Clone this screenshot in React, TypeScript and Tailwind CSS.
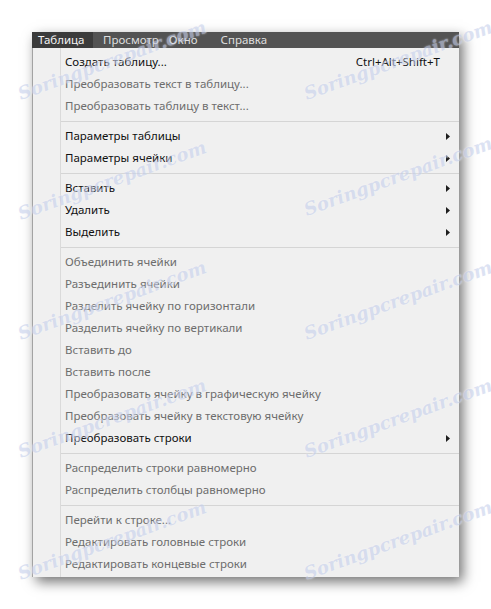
import React from 'react';

type Item =
    | { sep: true }
    | { label: string; disabled?: boolean; sub?: boolean; keys?: string };

const items: Item[] = [
    { label: 'Создать таблицу...', keys: 'Ctrl+Alt+Shift+T' },
    { label: 'Преобразовать текст в таблицу...', disabled: true },
    { label: 'Преобразовать таблицу в текст...', disabled: true },
    { sep: true },
    { label: 'Параметры таблицы', sub: true },
    { label: 'Параметры ячейки', sub: true },
    { sep: true },
    { label: 'Вставить', sub: true },
    { label: 'Удалить', sub: true },
    { label: 'Выделить', sub: true },
    { sep: true },
    { label: 'Объединить ячейки', disabled: true },
    { label: 'Разъединить ячейки', disabled: true },
    { label: 'Разделить ячейку по горизонтали', disabled: true },
    { label: 'Разделить ячейку по вертикали', disabled: true },
    { label: 'Вставить до', disabled: true },
    { label: 'Вставить после', disabled: true },
    { label: 'Преобразовать ячейку в графическую ячейку', disabled: true },
    { label: 'Преобразовать ячейку в текстовую ячейку', disabled: true },
    { label: 'Преобразовать строки', sub: true },
    { sep: true },
    { label: 'Распределить строки равномерно', disabled: true },
    { label: 'Распределить столбцы равномерно', disabled: true },
    { sep: true },
    { label: 'Перейти к строке...', disabled: true },
    { label: 'Редактировать головные строки', disabled: true },
    { label: 'Редактировать концевые строки', disabled: true },
];

// watermark centres, as seen on the screenshot
const marks = [
    [112, 60], [398, 60],
    [112, 180], [398, 176],
    [112, 300], [398, 300],
    [112, 418], [398, 418],
    [112, 540], [398, 540],
];

const Arrow = () => (
    <svg width="4" height="7" viewBox="0 0 4 7" className="shrink-0">
        <polygon points="0,0 4,3.5 0,7" fill="#1e1e1e" />
    </svg>
);

export default function App() {
    return (
        <div className="relative w-[491px] h-[609px] bg-white overflow-hidden font-['Noto_Sans','Open_Sans',sans-serif] text-[11.5px]">
            <div className="pt-[32px] pl-[32px]">
                <div className="w-[427px] shadow-[4px_5px_12px_rgba(0,0,0,0.55)]">
                    {/* Menu bar */}
                    <div className="h-[16px] bg-[#535353] flex items-center text-[#dedede] leading-none">
                        <div className="h-full w-[61px] bg-[#3b3b3b] text-[#f4f4f4] flex items-center pl-[6px]">Таблица</div>
                        <span className="ml-[10px]">Просмотр</span>
                        <span className="ml-[10px]">Окно</span>
                        <span className="ml-[23px]">Справка</span>
                    </div>

                    {/* Drop-down */}
                    <div className="flex bg-[#f0f0f0] border-l border-[#a3a3a3]">
                        <div className="w-[27px] shrink-0" />
                        <div className="flex-1 border-l border-[#dadada] pt-[3px] pb-[2px]">
                            {items.map((it, i) =>
                                'sep' in it ? (
                                    <div key={i} className="h-[8px] pt-[4px]">
                                        <div className="h-px bg-[#d5d5d5]" />
                                    </div>
                                ) : (
                                    <div key={i} className="h-[22px] flex items-center pl-[4px] pr-[9px]">
                                        <span className={`flex-1 whitespace-nowrap ${it.disabled ? 'text-[#6d6d6d]' : 'text-[#111]'}`}>{it.label}</span>
                                        {it.keys && <span className="text-[#111] mr-[10px]">{it.keys}</span>}
                                        {it.sub && <Arrow />}
                                    </div>
                                )
                            )}
                        </div>
                    </div>
                </div>
            </div>

            {/* Watermarks */}
            {marks.map(([x, y], i) => (
                <span
                    key={i}
                    className="absolute pointer-events-none whitespace-nowrap -translate-x-1/2 -translate-y-1/2 -rotate-[20deg] font-['DejaVu_Serif',serif] italic font-bold text-[18px] text-[#c6d0ec] opacity-60 [text-shadow:0_0_2px_#fff]"
                    style={{ left: x, top: y }}
                >
                    Soringpcrepair.com
                </span>
            ))}
        </div>
    );
}
